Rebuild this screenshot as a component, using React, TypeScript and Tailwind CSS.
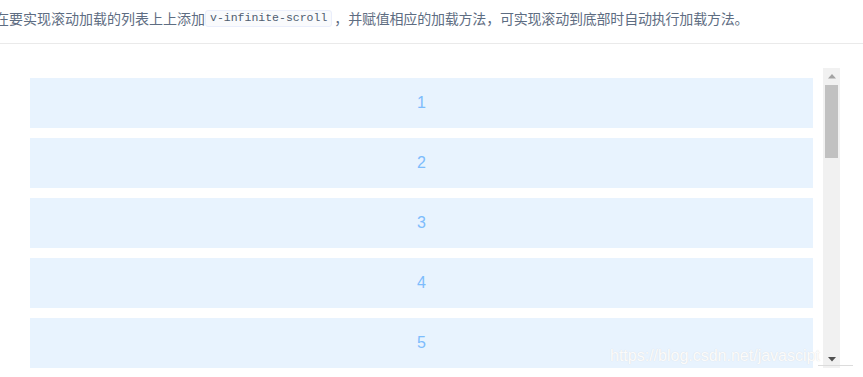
import React from "react";

const items = [1, 2, 3, 4, 5, 6, 7, 8];

export default function App() {
  return (
    <div className="relative w-[863px] h-[377px] overflow-hidden bg-white" style={{ fontFamily: '"Noto Sans CJK SC", "Liberation Sans", sans-serif' }}>
      <div className="h-[44px] border-b border-[#eaeaea] pt-[7px]">
        <p className="ml-[-5px] text-[14px] leading-[22px] text-[#5e6d82] whitespace-nowrap flex items-center">
          <span>在要实现滚动加载的列表上上添加</span>
          <code className="ml-0 mr-[2px] h-[17px] px-[4px] flex items-center rounded-[3px] border border-[#eaeefb] bg-[#f9fafc] text-[11.5px] text-[#4f5d70]" style={{ fontFamily: '"Liberation Mono", monospace' }}>v-infinite-scroll</code>
          <span className="tracking-[-0.2px]">，并赋值相应的加载方法，可实现滚动到底部时自动执行加载方法。</span>
        </p>
      </div>
      <div className="pt-[24px] pl-[20px]">
        <div className="flex w-[820px] h-[300px]">
          <ul className="flex-1 h-full overflow-hidden pt-[10px]" style={{ fontFamily: '"Liberation Sans", sans-serif' }}>
            {items.map((n) => (
              <li key={n} className="mx-[10px] mb-[10px] h-[50px] flex items-center justify-center bg-[#e8f3fe] text-[#7dbcfc] text-[16px]">
                {n}
              </li>
            ))}
          </ul>
          <div className="w-[17px] h-full bg-[#f1f1f1] flex flex-col items-center">
            <div className="h-[17px] w-full flex items-center justify-center">
              <svg width="8" height="5" viewBox="0 0 8 5"><path d="M4 0 L8 4.5 L0 4.5 Z" fill="#a3a3a3" /></svg>
            </div>
            <div className="w-[13px] h-[73px] bg-[#c1c1c1]" />
            <div className="flex-1" />
            <div className="h-[17px] w-full flex items-center justify-center">
              <svg width="8" height="5" viewBox="0 0 8 5"><path d="M0 0 L8 0 L4 4.5 Z" fill="#505050" /></svg>
            </div>
          </div>
        </div>
      </div>
      <div className="absolute left-[610px] top-[344px] text-[16px] text-white/90 whitespace-nowrap" style={{ fontFamily: '"Liberation Sans", sans-serif', textShadow: "0 0 1px #d4d4d4" }}>
        https://blog.csdn.net/javascipt
      </div>
      <div className="absolute left-[818px] top-[365px] w-[35px] h-px bg-[#dcdcdc]" />
    </div>
  );
}
